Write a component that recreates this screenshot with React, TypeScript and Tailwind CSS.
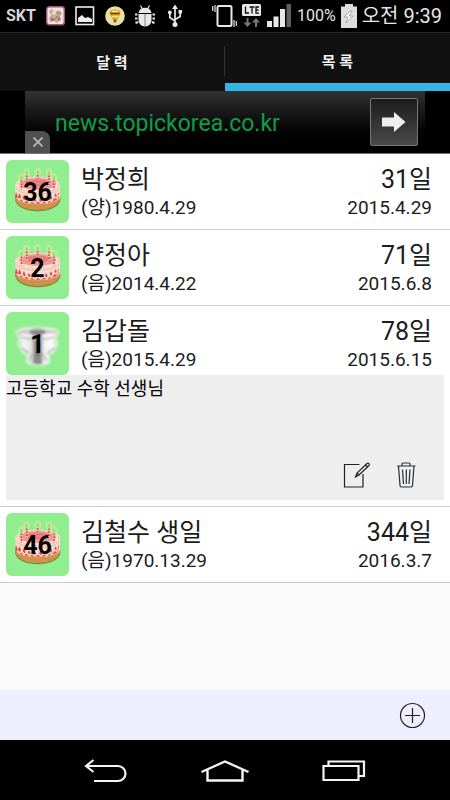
import React from "react";

type Person = {
  name: string;
  birth: string;
  left: string;
  next: string;
  age: number;
  icon: "cake" | "urn";
  memo?: string;
};

const people: Person[] = [
  { name: "박정희", birth: "(양)1980.4.29", left: "31일", next: "2015.4.29", age: 36, icon: "cake" },
  { name: "양정아", birth: "(음)2014.4.22", left: "71일", next: "2015.6.8", age: 2, icon: "cake" },
  {
    name: "김갑돌",
    birth: "(음)2015.4.29",
    left: "78일",
    next: "2015.6.15",
    age: 1,
    icon: "urn",
    memo: "고등학교 수학 선생님",
  },
  { name: "김철수 생일", birth: "(음)1970.13.29", left: "344일", next: "2016.3.7", age: 46, icon: "cake" },
];

function Candle({ x, y }: { x: number; y: number }) {
  return (
    <g>
      <ellipse cx={x} cy={y} rx="3" ry="3.800" fill="#a9f09a" stroke="#c9e8a4" strokeWidth="0.9" />
      <ellipse cx={x} cy={y + 0.5} rx="0.8" ry="1.800" fill="#dcb04a" />
      <path d={`M${x} ${y + 3}v9`} stroke="#f6e6dc" strokeWidth="1.600" />
      <path d={`M${x} ${y + 3}v9`} stroke="#dc3a3c" strokeWidth="1.600" strokeDasharray="1.800 1" />
    </g>
  );
}

function Cake() {
  return (
    <svg viewBox="0 0 63 63" className="h-full w-full" aria-hidden="true">
      <path d="M9 38.500c0 17 45.500 17 45.500 0z" fill="#7c8a44" />
      <path d="M9 36.500c0 18 45.500 18 45.500 0z" fill="#cf9248" />
      <path d="M9.500 25v12c2 9.500 42.500 9.500 44.500 0V25z" fill="#f6dccb" />
      <path
        d="M10 32l2 5 1.500-4 2.500 6 2-4 2.500 6 2.500-4 2.500 5 3-4 3 4 3-4 3 4 2.500-5 2.500 4 2.500-6 2 4 2.500-6 1.500 3 2-4v5c-3 9-39.500 9-44 0z"
        fill="#e0504a"
      />
      <path
        d="M11 37.500l2.500 2.500 2-2 2.500 3.500 2.500-2 3 3 2.500-2 3 2.500 3-2.500 3 2.500 3-2.500 3 2 2-3 2.500 1.500 2.500-4 2.500 1 2-3"
        fill="none"
        stroke="#f9e2d4"
        strokeWidth="1.500"
      />
      <ellipse cx="31.700" cy="25" rx="22.500" ry="8.500" fill="#f9e3d2" />
      <ellipse cx="31.700" cy="24" rx="18.500" ry="6" fill="#f09a94" />
      <ellipse cx="31.700" cy="23" rx="12" ry="3.500" fill="#e87c7c" />
      <ellipse cx="31.700" cy="25" rx="21" ry="7.500" fill="none" stroke="#ec9f93" strokeWidth="0.8" strokeDasharray="2 2" />
      <path d="M10 28c4 8.500 39 8.500 43.500 0" fill="none" stroke="#e8aa9c" strokeWidth="0.7" />
      <Candle x={15.5} y={17.5} />
      <Candle x={48} y={17.5} />
      <Candle x={20.7} y={12.5} />
      <Candle x={31.7} y={12} />
      <Candle x={43} y={12.5} />
    </svg>
  );
}

function Urn() {
  return (
    <svg viewBox="0 0 63 63" className="h-full w-full" aria-hidden="true">
      <defs>
        <linearGradient id="silver">
          <stop offset="0" stopColor="#b8b8b8" />
          <stop offset="0.15" stopColor="#f4f4f4" />
          <stop offset="0.35" stopColor="#e6e6e6" />
          <stop offset="0.46" stopColor="#777" />
          <stop offset="0.54" stopColor="#6a6a6a" />
          <stop offset="0.65" stopColor="#f0f0f0" />
          <stop offset="0.85" stopColor="#fdfdfd" />
          <stop offset="1" stopColor="#c4c4c4" />
        </linearGradient>
        <filter id="soft" x="-20%" y="-20%" width="140%" height="140%">
          <feGaussianBlur stdDeviation="0.8" />
        </filter>
      </defs>
      <g filter="url(#soft)">
        <path
          d="M10.500 20c1-6 41-6 42 0 0 4-3 5-4 6 4 4 4 8 0 10 1 4-2 6-6 6l1 8c-3 4-19 4-23 0l1-8c-5 0-7-2-6-6-5-2-4-7-1-10-2-1-4-2-4-6z"
          fill="url(#silver)"
          stroke="#dcf6d8"
          strokeWidth="1.600"
        />
        <path d="M12 20c4-4 35-4 39 0-5 3-34 3-39 0z" fill="#c9c9c9" />
        <path d="M24 18.500h15v3H24z" fill="#6f6f6f" />
        <path d="M15 25c8 3 26 3 33 0" fill="none" stroke="#b9b9b9" strokeWidth="1.500" />
        <path d="M16 36c2 3 5 4 7 5M48 36c-2 3-5 4-7 5M26 42l-3 7M37 42l4 7" fill="none" stroke="#aaa" strokeWidth="1.500" />
        <path d="M28 44h7l1 7h-9z" fill="#8a8a8a" />
      </g>
    </svg>
  );
}

function StatusBar() {
  return (
    <header className="flex h-8 items-center bg-black pr-2 pl-[6px] text-[#e6e6e6]">
      <div className="flex flex-1 items-center gap-[10px]">
        <span className="text-base font-bold text-[#d5d5d5]">SKT</span>
        <svg width="19" height="20" viewBox="0 0 19 20" aria-hidden="true">
          <rect x="0.7" y="0.7" width="17.600" height="18" rx="2.500" fill="#eee4dc" stroke="#a0507c" strokeWidth="1.400" />
          <path d="M3 5l3-2 3 3 4-2 3 3-2 4 1 3-4 3-3-2-4 1-1-4 2-3z" fill="#c4a891" />
          <circle cx="8" cy="7" r="2" fill="#efd9c2" />
          <path d="M5 12l3 2 4-4M11 6l3 2" stroke="#8a6a66" strokeWidth="1" fill="none" />
          <circle cx="6" cy="14" r="1.200" fill="#d84b79" />
          <circle cx="13" cy="13" r="1.200" fill="#c4456f" />
        </svg>
        <svg width="20" height="20" viewBox="0 0 20 20" aria-hidden="true">
          <rect x="1" y="1" width="17.500" height="17.500" fill="none" stroke="#eee" strokeWidth="1.600" />
          <path d="M3 16v-4l4-3 3 3 3-1 4 2v3z" fill="#eee" />
        </svg>
        <svg width="20" height="20" viewBox="0 0 20 20" aria-hidden="true">
          <circle cx="10" cy="10" r="9.800" fill="#e2e3a4" />
          <path d="M10 3.500c7.500 0 6 5 3.500 7.500L12 14H8l-1.500-3C4 8.500 2.500 3.500 10 3.500z" fill="#e3ab2a" />
          <path d="M5.500 7.500h9" stroke="#5e3f18" strokeWidth="1.600" />
          <path d="M7 10.500h6" stroke="#fbe7a0" strokeWidth="1.200" />
          <path d="M8 13.500h4l-1 3H9z" fill="#8f6218" />
          <path d="M7 5.500h6" stroke="#fff3b0" strokeWidth="1.200" />
        </svg>
        <svg width="20" height="22" viewBox="0 0 20 22" aria-hidden="true">
          <path d="M3.500 8C4 4.500 6.500 2.800 10 2.800S16 4.500 16.500 8z" fill="#e8e8e8" />
          <path d="M5.500 0.500L7.500 4M14.500 0.500L12.500 4" stroke="#e8e8e8" strokeWidth="1.200" />
          <path d="M3.500 9h13v6c0 3.500-2.500 6.500-6.500 6.500S3.500 18.500 3.500 15z" fill="#e8e8e8" />
          <path d="M10 9v12" stroke="#555" strokeWidth="0.7" />
          <path d="M0 9.500h2.500M0 13.500h2.500M0.500 18l2.500-1M17.500 9.500H20M17.500 13.500H20M19.500 18L17 17" stroke="#e8e8e8" strokeWidth="2" />
        </svg>
        <svg width="20" height="24" viewBox="0 0 20 24" fill="none" stroke="#e8e8e8" strokeWidth="1.700" aria-hidden="true">
          <path d="M10 4v16M4.800 9v4.500L10 17M15.200 8v4.500L10 15.500" />
          <path d="M10 0.500L13 5H7z" fill="#e8e8e8" stroke="none" />
          <circle cx="10" cy="20.500" r="2.500" fill="#e8e8e8" stroke="none" />
          <circle cx="4.800" cy="8.500" r="1.900" fill="#e8e8e8" stroke="none" />
          <path d="M13.500 6h3.500v3.500h-3.500z" fill="#e8e8e8" stroke="none" />
        </svg>
      </div>
      <div className="flex items-center gap-[5px]">
        <svg width="25" height="24" viewBox="0 0 25 24" fill="none" stroke="#e8e8e8" aria-hidden="true">
          <rect x="5.500" y="2" width="14" height="20" rx="1.500" strokeWidth="2" />
          <path d="M0.700 2v5M3 1v7M22 16v7M24.300 17v5" strokeWidth="1.200" />
        </svg>
        <svg width="20" height="24" viewBox="0 0 20 24" aria-hidden="true">
          <rect x="0" y="0" width="19" height="12" rx="1.500" fill="#e8e8e8" />
          <path d="M3.500 2.500v6.500h3.500M7.500 3h5M10 3v6.500M17 3h-3v6.200h3M14 6h2.500" fill="none" stroke="#111" strokeWidth="1.300" />
          <path d="M5.500 23l-4-4.500h3V14h2v4.500h3zM14 14l4 4.500h-3V23h-2v-4.500h-3z" fill="#777" />
        </svg>
        <svg width="25" height="24" viewBox="0 0 25 24" fill="#e8e8e8" aria-hidden="true">
          <path d="M0 17h5v6H0zM6.500 12.500h5V23h-5zM13 5h5v18h-5z" />
          <path d="M19.500 0h4.500v23h-4.500z" fill="#606060" />
        </svg>
        <span className="text-base">100%</span>
        <svg width="16" height="24" viewBox="0 0 16 24" aria-hidden="true">
          <path d="M4 0h8v2.500h4V24H0V2.500h4z" fill="#dedede" />
          <path d="M9 7l-6 6h4l-2 6 7-7H8l3-5z" fill="#fff" stroke="#999" strokeWidth="0.8" />
        </svg>
        <span className="text-xl">오전 9:39</span>
      </div>
    </header>
  );
}

function Tabs() {
  return (
    <nav className="flex h-[59px] border-t border-[#262626] bg-[#111] text-[15px] font-bold text-[#f2f2f2]">
      <button className="flex flex-1 flex-col">
        <span className="mt-[13px] flex h-[30px] w-full items-center justify-center border-r border-[#333] pt-1">
          달 력
        </span>
      </button>
      <button className="flex flex-1 items-center justify-center border-b-8 border-[#33b5e5] pt-2">목 록</button>
    </nav>
  );
}

function AdBanner() {
  return (
    <div className="border-b border-[#777] bg-black">
      <div className="relative mx-auto flex h-[62px] w-8/9 items-center justify-between bg-linear-to-b from-[#333] to-black pr-[7px] pl-[30px]">
        <a href="#ad" className="pt-1 text-[23px] text-[#0f9d4a]">
          news.topickorea.co.kr
        </a>
        <button
          aria-label="열기"
          className="flex h-12 w-12 items-center justify-center rounded-xs border border-[#777] bg-linear-to-b from-[#1d1d1d] to-[#4a4a4a]"
        >
          <svg width="24" height="22" viewBox="0 0 24 22" aria-hidden="true">
            <path d="M0 6.500h12V1l11.500 10L12 21v-5.500H0z" fill="#eee" />
          </svg>
        </button>
        <button
          aria-label="닫기"
          className="absolute bottom-0 left-0 flex h-[22px] w-[25px] items-center justify-center rounded-tr-lg bg-[#505050]"
        >
          <svg width="10" height="10" viewBox="0 0 10 10" stroke="#bbb" strokeWidth="1.600" aria-hidden="true">
            <path d="M0.500 0.500l9 9M9.500 0.500l-9 9" />
          </svg>
        </button>
      </div>
    </div>
  );
}

function Memo({ text }: { text: string }) {
  return (
    <div className="flex h-[125px] flex-col justify-between bg-[#eee] pr-6 pb-[10px]">
      <p className="text-lg leading-7 text-black">{text}</p>
      <div className="flex justify-end gap-[22px]">
        <button aria-label="수정">
          <svg width="30" height="30" viewBox="0 0 30 30" fill="none" stroke="#222" strokeWidth="1.200" aria-hidden="true">
            <path d="M17.500 4.500H2.500v22.500h18.500V14" />
            <path d="M13.500 17l1.500-4L25 3.500c1.500-1 3 .5 2 2L17 15zM15 13l2 2M23.500 5l2 2" />
          </svg>
        </button>
        <button aria-label="삭제">
          <svg width="26" height="30" viewBox="0 0 26 30" fill="none" stroke="#2a2f38" strokeWidth="1.200" aria-hidden="true">
            <path d="M3 6h18.500M8 5.500V4q0-1 1-1h6q1 0 1 1v1.500M4.500 6l1.500 19.500q0 1.500 1.500 1.500h9.500q1.500 0 1.500-1.500L20 6" />
            <path d="M8.500 9.500l1 14.500M12.300 9.500V24M16 9.500l-1 14.500" />
          </svg>
        </button>
      </div>
    </div>
  );
}

function Row({ person }: { person: Person }) {
  return (
    <li className="border-b border-[#ccc] bg-white p-[6px]">
      <div className="flex gap-3 pr-3">
        <div className="relative h-[63px] w-[63px] rounded-md bg-[#90ee90]">
          {person.icon === "cake" ? <Cake /> : <Urn />}
          <span className="absolute inset-0 flex items-center justify-center pt-[2px] text-[25px] font-bold text-black">
            {person.age}
          </span>
        </div>
        <div className="flex-1">
          <h2 className="text-[25px] leading-10">{person.name}</h2>
          <p className="text-[19px] leading-4">{person.birth}</p>
        </div>
        <div className="text-right">
          <p className="text-[25px] leading-10">{person.left}</p>
          <p className="text-[19px] leading-4">{person.next}</p>
        </div>
      </div>
      {person.memo && <Memo text={person.memo} />}
    </li>
  );
}

function NavBar() {
  return (
    <nav className="flex h-[60px] items-center justify-center gap-[73px] bg-black pt-1">
      <button aria-label="뒤로">
        <svg width="44" height="26" viewBox="0 0 44 26" fill="none" stroke="#f4f4f4" strokeWidth="2.200" aria-hidden="true">
          <path d="M10 22h24a7.500 7.500 0 0 0 0-15H2M9.500 1L2 7l7.500 6" />
        </svg>
      </button>
      <button aria-label="홈">
        <svg width="48" height="26" viewBox="0 0 48 26" fill="none" stroke="#f4f4f4" strokeWidth="2.400" aria-hidden="true">
          <path d="M0.500 13L24 2.500 47.500 13M6.500 11v10.500h35V11" />
        </svg>
      </button>
      <button aria-label="최근 앱">
        <svg width="44" height="26" viewBox="0 0 44 26" fill="none" stroke="#f4f4f4" strokeWidth="2.200" aria-hidden="true">
          <path d="M1.500 7h35v14h-35zM6.500 6V2.500H42V17h-4.500" />
        </svg>
      </button>
    </nav>
  );
}

export default function App() {
  return (
    <div className="flex min-h-screen flex-col bg-[#fafafa] font-[Roboto,'Noto_Sans_CJK_KR',sans-serif] text-[#1c1c1c]">
      <StatusBar />
      <Tabs />
      <AdBanner />
      <main className="flex-1">
        <ul>
          {people.map((person) => (
            <Row key={person.name} person={person} />
          ))}
        </ul>
      </main>
      <footer className="flex h-[50px] items-center justify-end bg-[#eef] pr-6">
        <button aria-label="추가">
          <svg width="27" height="27" viewBox="0 0 27 27" fill="none" stroke="#222" strokeWidth="1.200" aria-hidden="true">
            <circle cx="13.500" cy="13.500" r="12" />
            <path d="M13.500 6v15M6 13.500h15" />
          </svg>
        </button>
      </footer>
      <NavBar />
    </div>
  );
}
